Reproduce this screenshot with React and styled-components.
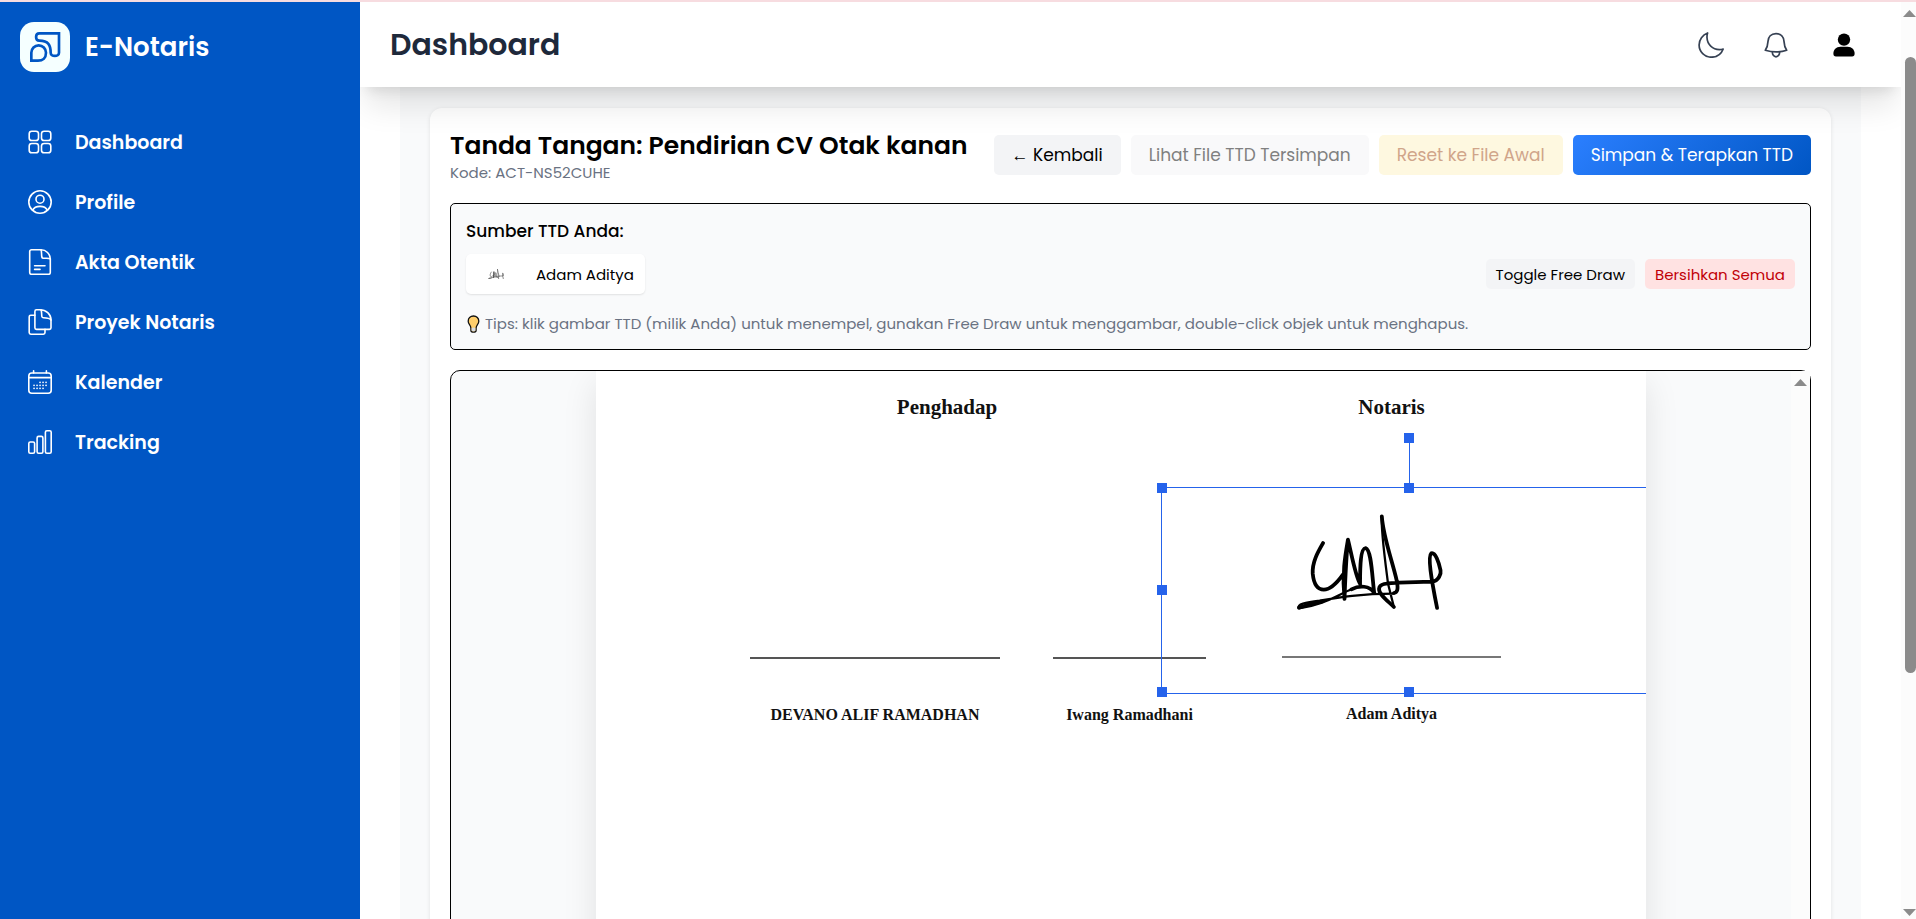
import React from "react";
import styled, { createGlobalStyle } from "styled-components";

const BLUE = "#0056c4";
const SELECT = "#2563eb";

const GlobalStyle = createGlobalStyle`
  *, *::before, *::after { box-sizing: border-box; }
  body { margin: 0; background: #ffffff; color: #000000; font-family: Poppins, "Liberation Sans", sans-serif; }
  h1, h2, h3, p, ul { margin: 0; padding: 0; font: inherit; }
  button { font: inherit; color: inherit; border: 0; margin: 0; cursor: pointer; }
  svg { display: block; flex: none; }
`;

const Shell = styled.div`
  display: flex;
  flex-direction: column;
  height: 100vh;
  overflow: hidden;
`;
const LoadingStrip = styled.div`
  height: 2px;
  flex: none;
  background: #f7dce0;
`;
const Body = styled.div`
  display: flex;
  flex: 1;
  min-height: 0;
`;

const Sidebar = styled.aside`
  width: 360px;
  flex: none;
  background: ${BLUE};
  color: #ffffff;
  padding: 20px;
`;
const Brand = styled.div`
  display: flex;
  align-items: center;
  gap: 15px;
  font-size: 26px;
  font-weight: 600;
`;
const NavList = styled.ul`
  list-style: none;
  margin-top: 40px;
`;
const NavLink = styled.a`
  display: flex;
  align-items: center;
  gap: 23px;
  height: 60px;
  padding-left: 8px;
  color: inherit;
  text-decoration: none;
  font-size: 19px;
  font-weight: 600;
`;

const Main = styled.main`
  display: flex;
  flex-direction: column;
  flex: 1;
  min-width: 0;
  overflow: hidden;
`;
const Header = styled.header`
  display: flex;
  align-items: center;
  justify-content: space-between;
  height: 85px;
  flex: none;
  padding: 0 44px 0 30px;
  background: #ffffff;
  position: relative;
  z-index: 2;
  box-shadow: 0 25px 31px -6px rgba(0, 0, 0, 0.1), 0 10px 12px -7px rgba(0, 0, 0, 0.1);
`;
const PageTitle = styled.h1`
  font-size: 30px;
  font-weight: 600;
  color: #1e293b;
`;
const HeaderActions = styled.div`
  display: flex;
  align-items: center;
  gap: 42px;
  color: #364153;
`;
const QuickToggles = styled.div`
  display: flex;
  align-items: center;
  gap: 39px;
`;
const IconButton = styled.button`
  background: none;
  padding: 0;
`;
const Content = styled.div`
  flex: 1;
  min-height: 0;
  padding: 0 40px;
  overflow: hidden;
`;
const Backdrop = styled.div`
  background: #f9fafb;
  padding: 21px 30px 30px;
`;
const Card = styled.section`
  background: #ffffff;
  border-radius: 12px;
  padding: 20px;
  box-shadow: 0 1px 4px rgba(0, 0, 0, 0.1);
`;
const CardHead = styled.div`
  display: flex;
  align-items: center;
  justify-content: space-between;
  margin-bottom: 21px;
`;
const CardTitle = styled.h2`
  font-size: 25px;
  line-height: 36px;
  font-weight: 600;
`;
const Code = styled.p`
  font-size: 15px;
  line-height: 18px;
  color: #6a7282;
`;
const ButtonRow = styled.div`
  display: flex;
  gap: 10px;
`;
const tones = {
  plain: "background: #f3f4f6; color: #000000;",
  muted: "background: #f9f9fa; color: #808080;",
  amber: "background: #fef8e0; color: #d0a58a;",
  primary: "background: linear-gradient(135deg, #2b7fff, #0056c4); color: #ffffff;",
  danger: "background: #ffe2e2; color: #c10007;",
};
const Button = styled.button`
  height: ${(p) => (p.$small ? 30 : 40)}px;
  padding: 0 ${(p) => (p.$small ? 10 : 18)}px;
  border-radius: 5px;
  font-size: ${(p) => (p.$small ? 15 : 17)}px;
  white-space: nowrap;
  ${(p) => tones[p.$tone]}
`;

const SourceBox = styled.section`
  border: 1px solid #000000;
  border-radius: 5px;
  background: #f9fafb;
  padding: 15px;
  margin-bottom: 20px;
`;
const SourceTitle = styled.h3`
  font-size: 17px;
  line-height: 25px;
  font-weight: 500;
  margin-bottom: 10px;
`;
const SourceRow = styled.div`
  display: flex;
  align-items: center;
  justify-content: space-between;
  margin-bottom: 20px;
`;
const SignatureChip = styled.button`
  display: flex;
  align-items: center;
  height: 40px;
  gap: 32px;
  padding: 0 11px 0 22px;
  background: #ffffff;
  border-radius: 5px;
  box-shadow: 0 1px 2px rgba(0, 0, 0, 0.1);
  font-size: 15px;
`;
const Tip = styled.p`
  display: flex;
  align-items: center;
  gap: 4px;
  font-size: 15px;
  line-height: 20px;
  color: #6a7282;
`;

const Viewer = styled.section`
  display: flex;
  height: 875px;
  border: 1px solid #000000;
  border-radius: 10px;
  background: #f9fafb;
`;
const Stage = styled.div`
  display: flex;
  justify-content: center;
  flex: 1;
  min-width: 0;
  overflow: hidden;
  border-radius: 9px 0 0 9px;
`;
const Sheet = styled.article`
  position: relative;
  width: 1050px;
  flex: none;
  overflow: hidden;
  padding: 24px 0 0 154px;
  background: #ffffff;
  box-shadow: 0 12px 32px rgba(0, 0, 0, 0.1);
  font-family: "Liberation Serif", serif;
  font-weight: 700;
  text-align: center;
  color: #111111;
`;
const RoleRow = styled.div`
  display: grid;
  grid-template-columns: 394px 219px;
  column-gap: 138px;
  font-size: 21px;
  line-height: 24px;
`;
const SignerRow = styled.div`
  display: grid;
  grid-template-columns: 250px 153px 219px;
  justify-content: start;
  column-gap: 53px;
`;
const Signer = styled.div`
  margin-left: ${(p) => (p.$notary ? 23 : 0)}px;
  margin-right: ${(p) => (p.$notary ? -23 : 0)}px;
  font-size: 16px;
  line-height: 20px;
  white-space: nowrap;
`;
const SignLine = styled.div`
  height: ${(p) => (p.$notary ? 239 : 240)}px;
  margin-bottom: 46px;
  border-bottom: 2px solid ${(p) => (p.$notary ? "#777777" : "#555555")};
`;

const Selection = styled.div`
  position: absolute;
  left: 565px;
  top: 116px;
  width: 496px;
  height: 207px;
  border: 1px solid ${SELECT};
`;
const Handle = styled.span`
  position: absolute;
  width: 10px;
  height: 10px;
  background: ${SELECT};
  left: ${(p) => p.$x}px;
  top: ${(p) => p.$y}px;
`;
const Stem = styled.span`
  position: absolute;
  left: 247px;
  top: -50px;
  width: 1px;
  height: 50px;
  background: ${SELECT};
`;
const Ink = styled.div`
  position: absolute;
  left: 130px;
  top: 24px;
`;

const ScrollRail = styled.div`
  position: relative;
  display: flex;
  flex-direction: column;
  align-items: ${(p) => (p.$page ? "flex-end" : "center")};
  justify-content: space-between;
  width: ${(p) => (p.$page ? 15 : 19)}px;
  flex: none;
  padding: ${(p) => (p.$page ? "8px 0 3px" : "8px 0")};
  background: #fcfcfc;
`;
const ThumbTrack = styled.div`
  flex: 1;
  padding-top: 40px;
`;
const Thumb = styled.div`
  width: 11px;
  height: 616px;
  border-radius: 6px;
  background: #8b8b8b;
`;

const Stroke = ({ size = 24, width = 1.5, box = "0 0 24 24", children }) => (
  <svg width={size} height={size} viewBox={box} fill="none" stroke="currentColor" strokeWidth={width} strokeLinecap="round" strokeLinejoin="round" aria-hidden="true">
    {children}
  </svg>
);

const Logo = () => (
  <svg width="50" height="50" viewBox="60 66 150 150" aria-hidden="true">
    <rect x="60" y="66" width="150" height="150" rx="42" fill="#f5ffff" />
    <g fill="none" stroke={BLUE} strokeWidth="8">
      <path d="M118 100H177V158C177 171 152 171 152 158C152 135 145 122 118 122C105 122 105 100 118 100Z" />
      <path d="M94 182V158A22 22 0 0 1 138 158C138 174 128 182 114 182Z" />
    </g>
  </svg>
);

const icons = {
  grid: (
    <Stroke width={1.6}>
      <rect x="1.2" y="1.2" width="9.3" height="9.3" rx="2.6" />
      <rect x="13.5" y="1.2" width="9.3" height="9.3" rx="2.6" />
      <rect x="1.2" y="13.5" width="9.3" height="9.3" rx="2.6" />
      <rect x="13.5" y="13.5" width="9.3" height="9.3" rx="2.6" />
    </Stroke>
  ),
  user: (
    <Stroke width={1.6}>
      <circle cx="12" cy="12" r="11.2" />
      <circle cx="12" cy="9.2" r="4" />
      <path d="M4.6 20.2C5.8 17.8 8.7 16.4 12 16.4C15.3 16.4 18.2 17.8 19.4 20.2" />
    </Stroke>
  ),
  file: (
    <Stroke size={26} width={1.6} box="-1 0 26 26">
      <path d="M3.5 .8H13C18 .8 22.3 5 22.3 10V23.5A1.8 1.8 0 0 1 20.5 25.3H3.5A1.8 1.8 0 0 1 1.7 23.5V2.6A1.8 1.8 0 0 1 3.5 .8Z" />
      <path d="M13 .8C13.8 2.5 13.4 5 13.8 8C14 9 14.5 9.3 15.5 9.3C18 9.3 20.8 8.8 22.3 10M6.6 16.8H17M6.6 20.4H12" />
    </Stroke>
  ),
  copy: (
    <Stroke size={26} width={1.6} box="-1 0 26 26">
      <path d="M8.5 .8H12C18 .8 23 5 23 11V18.8A1.6 1.6 0 0 1 21.4 20.4H8.5A1.6 1.6 0 0 1 6.9 18.8V2.4A1.6 1.6 0 0 1 8.5 .8Z" />
      <path d="M13 .8C14 3 13.4 5 13.9 7.6C14.1 8.5 14.6 8.8 15.5 8.8C18 8.8 21.5 9 23 11M6.9 6.2H2.8A1.6 1.6 0 0 0 1.2 7.8V23.6A1.6 1.6 0 0 0 2.8 25.2H15.4A1.6 1.6 0 0 0 17 23.6V20.4" />
    </Stroke>
  ),
  calendar: (
    <Stroke width={1.6}>
      <rect x=".8" y="3" width="22.4" height="20.2" rx="3" />
      <path d="M.8 7.6H23.2M5.6 .8V3M18.4 .8V3" />
      <path d="M12 12.4H12.1M15 12.4H15.1M18 12.4H18.1M6 15.4H6.1M9 15.4H9.1M12 15.4H12.1M15 15.4H15.1M18 15.4H18.1M6 18.4H6.1M9 18.4H9.1M12 18.4H12.1M15 18.4H15.1" />
    </Stroke>
  ),
  bars: (
    <Stroke width={1.6}>
      <rect x=".8" y="12" width="5.8" height="11.2" rx="1.5" />
      <rect x="9.1" y="6.4" width="5.8" height="16.8" rx="1.5" />
      <rect x="17.4" y=".8" width="5.8" height="22.4" rx="1.5" />
    </Stroke>
  ),
};

const NavIcon = styled.span`
  display: flex;
  justify-content: center;
  width: 24px;
`;

const MoonIcon = () => (
  <Stroke size={26} width={1.7} box="0 0 26 26">
    <path d="M9.6 1C9.1 2.6 8.9 4 9 5.6C9.2 12.4 14.6 17.6 21.4 17.6C22.7 17.6 24 17.4 25.2 17C23.3 22 18.6 25.2 13.4 25.2C6.6 25.2 1.1 19.7 1.1 12.9C1.1 7.6 4.6 2.8 9.6 1Z" />
  </Stroke>
);
const BellIcon = () => (
  <Stroke size={26} width={1.7} box="0 0 26 26">
    <path d="M13 1.6C8 1.6 5.2 5 5 9.4C4.8 13.6 4.4 15.4 2.3 18.2C8.6 20.2 17.4 20.2 23.7 18.2C21.6 15.4 21.2 13.6 21 9.4C20.8 5 18 1.6 13 1.6Z" />
    <path d="M9.4 19.8C9.2 22.6 10.8 24.8 13 24.8C15.2 24.8 16.8 22.6 16.6 19.8" />
  </Stroke>
);
const PersonIcon = () => (
  <svg width="26" height="26" viewBox="0 0 26 26" fill="#000000" aria-hidden="true">
    <circle cx="13" cy="7.6" r="6.2" />
    <path d="M9.5 14.8H16.5C21 14.8 23.6 18 23.6 21.4C23.6 23.6 22.8 24.4 21 24.4H5C3.2 24.4 2.4 23.6 2.4 21.4C2.4 18 5 14.8 9.5 14.8Z" />
  </svg>
);
const Bulb = () => (
  <svg width="15" height="20" viewBox="0 0 15 20" aria-hidden="true">
    <path d="M7.5 2C4.3 2 2.2 4.4 2.2 7.2C2.2 10.2 4.7 11 4.9 14V16.4C4.9 18.6 10.1 18.6 10.1 16.4V14C10.3 11 12.8 10.2 12.8 7.2C12.8 4.4 10.7 2 7.5 2Z" fill="#ffce6b" stroke="#111111" strokeWidth="1.3" />
    <path d="M5.6 13.8H9.4V16.4C9.4 17.5 5.6 17.5 5.6 16.4Z" fill="#d9dde3" />
  </svg>
);
const Signature = ({ width, height, weight, color = "#000000" }) => (
  <svg width={width} height={height} viewBox="500 395 440 300" preserveAspectRatio="none" fill="none" stroke={color} strokeLinecap="round" strokeLinejoin="round" role="img" aria-label="Tanda tangan">
    <path strokeWidth={weight} d="M590 488C575 515 558 545 560 580C563 612 575 628 592 628C612 628 632 605 648 582M662 478C655 520 644 580 652 656C654 600 656 540 662 478C672 520 684 590 697 610C697 560 698 504 713 503C730 508 732 590 738 638C725 615 695 615 672 627M760 408C764 470 790 540 803 600C808 625 806 636 795 638M795 680C775 660 750 640 752 625C754 608 780 609 810 607L905 604C925 602 932 580 930 570C925 545 915 515 903 519C893 528 902 590 920 683" />
    <path strokeWidth={weight * 0.6} d="M672 627C630 645 590 675 520 684C512 672 540 666 580 661C640 650 700 640 795 640M760 408C757 450 772 560 778 610L795 680" />
    <path strokeWidth={weight} d="M520 682C540 676 560 668 585 664" />
  </svg>
);
const Arrow = ({ down }) => (
  <svg width="13" height="7" viewBox="0 0 13 7" fill="#8b8b8b" aria-hidden="true">
    <path d={down ? "M0 0H13L6.5 7Z" : "M0 7H13L6.5 0Z"} />
  </svg>
);

const navItems = [
  ["grid", "Dashboard"],
  ["user", "Profile"],
  ["file", "Akta Otentik"],
  ["copy", "Proyek Notaris"],
  ["calendar", "Kalender"],
  ["bars", "Tracking"],
];
const signers = [
  { name: "DEVANO ALIF RAMADHAN" },
  { name: "Iwang Ramadhani" },
  { name: "Adam Aditya", notary: true },
];
const handles = [
  [-5, -5],
  [242, -5],
  [-5, 97],
  [-5, 199],
  [242, 199],
  [242, -55],
];

export default function App() {
  return (
    <Shell>
      <GlobalStyle />
      <LoadingStrip />
      <Body>
        <Sidebar>
          <Brand>
            <Logo />
            E-Notaris
          </Brand>
          <nav>
            <NavList>
              {navItems.map(([icon, label]) => (
                <li key={label}>
                  <NavLink href="#">
                    <NavIcon>{icons[icon]}</NavIcon>
                    {label}
                  </NavLink>
                </li>
              ))}
            </NavList>
          </nav>
        </Sidebar>
        <Main>
          <Header>
            <PageTitle>Dashboard</PageTitle>
            <HeaderActions>
              <QuickToggles>
                <IconButton aria-label="Mode gelap"><MoonIcon /></IconButton>
                <IconButton aria-label="Notifikasi"><BellIcon /></IconButton>
              </QuickToggles>
              <IconButton aria-label="Akun"><PersonIcon /></IconButton>
            </HeaderActions>
          </Header>
          <Content>
            <Backdrop>
              <Card>
                <CardHead>
                  <div>
                    <CardTitle>Tanda Tangan: Pendirian CV Otak kanan</CardTitle>
                    <Code>Kode: ACT-NS52CUHE</Code>
                  </div>
                  <ButtonRow>
                    <Button $tone="plain">← Kembali</Button>
                    <Button $tone="muted" disabled>Lihat File TTD Tersimpan</Button>
                    <Button $tone="amber" disabled>Reset ke File Awal</Button>
                    <Button $tone="primary">Simpan &amp; Terapkan TTD</Button>
                  </ButtonRow>
                </CardHead>
                <SourceBox>
                  <SourceTitle>Sumber TTD Anda:</SourceTitle>
                  <SourceRow>
                    <SignatureChip>
                      <Signature width={16} height={10} weight={16} color="#333333" />
                      Adam Aditya
                    </SignatureChip>
                    <ButtonRow>
                      <Button $small $tone="plain">Toggle Free Draw</Button>
                      <Button $small $tone="danger">Bersihkan Semua</Button>
                    </ButtonRow>
                  </SourceRow>
                  <Tip>
                    <Bulb />
                    Tips: klik gambar TTD (milik Anda) untuk menempel, gunakan Free Draw untuk menggambar, double-click objek untuk menghapus.
                  </Tip>
                </SourceBox>
                <Viewer>
                  <Stage>
                    <Sheet>
                      <RoleRow>
                        <span>Penghadap</span>
                        <span>Notaris</span>
                      </RoleRow>
                      <SignerRow>
                        {signers.map((s) => (
                          <Signer key={s.name} $notary={s.notary}>
                            <SignLine $notary={s.notary} />
                            {s.name}
                          </Signer>
                        ))}
                      </SignerRow>
                      <Selection>
                        <Stem />
                        {handles.map(([x, y]) => (
                          <Handle key={`${x},${y}`} $x={x} $y={y} />
                        ))}
                        <Ink><Signature width={152} height={100} weight={11} /></Ink>
                      </Selection>
                    </Sheet>
                  </Stage>
                  <ScrollRail>
                    <Arrow />
                  </ScrollRail>
                </Viewer>
              </Card>
            </Backdrop>
          </Content>
        </Main>
        <ScrollRail $page>
          <Arrow />
          <ThumbTrack>
            <Thumb />
          </ThumbTrack>
          <Arrow down />
        </ScrollRail>
      </Body>
    </Shell>
  );
}
